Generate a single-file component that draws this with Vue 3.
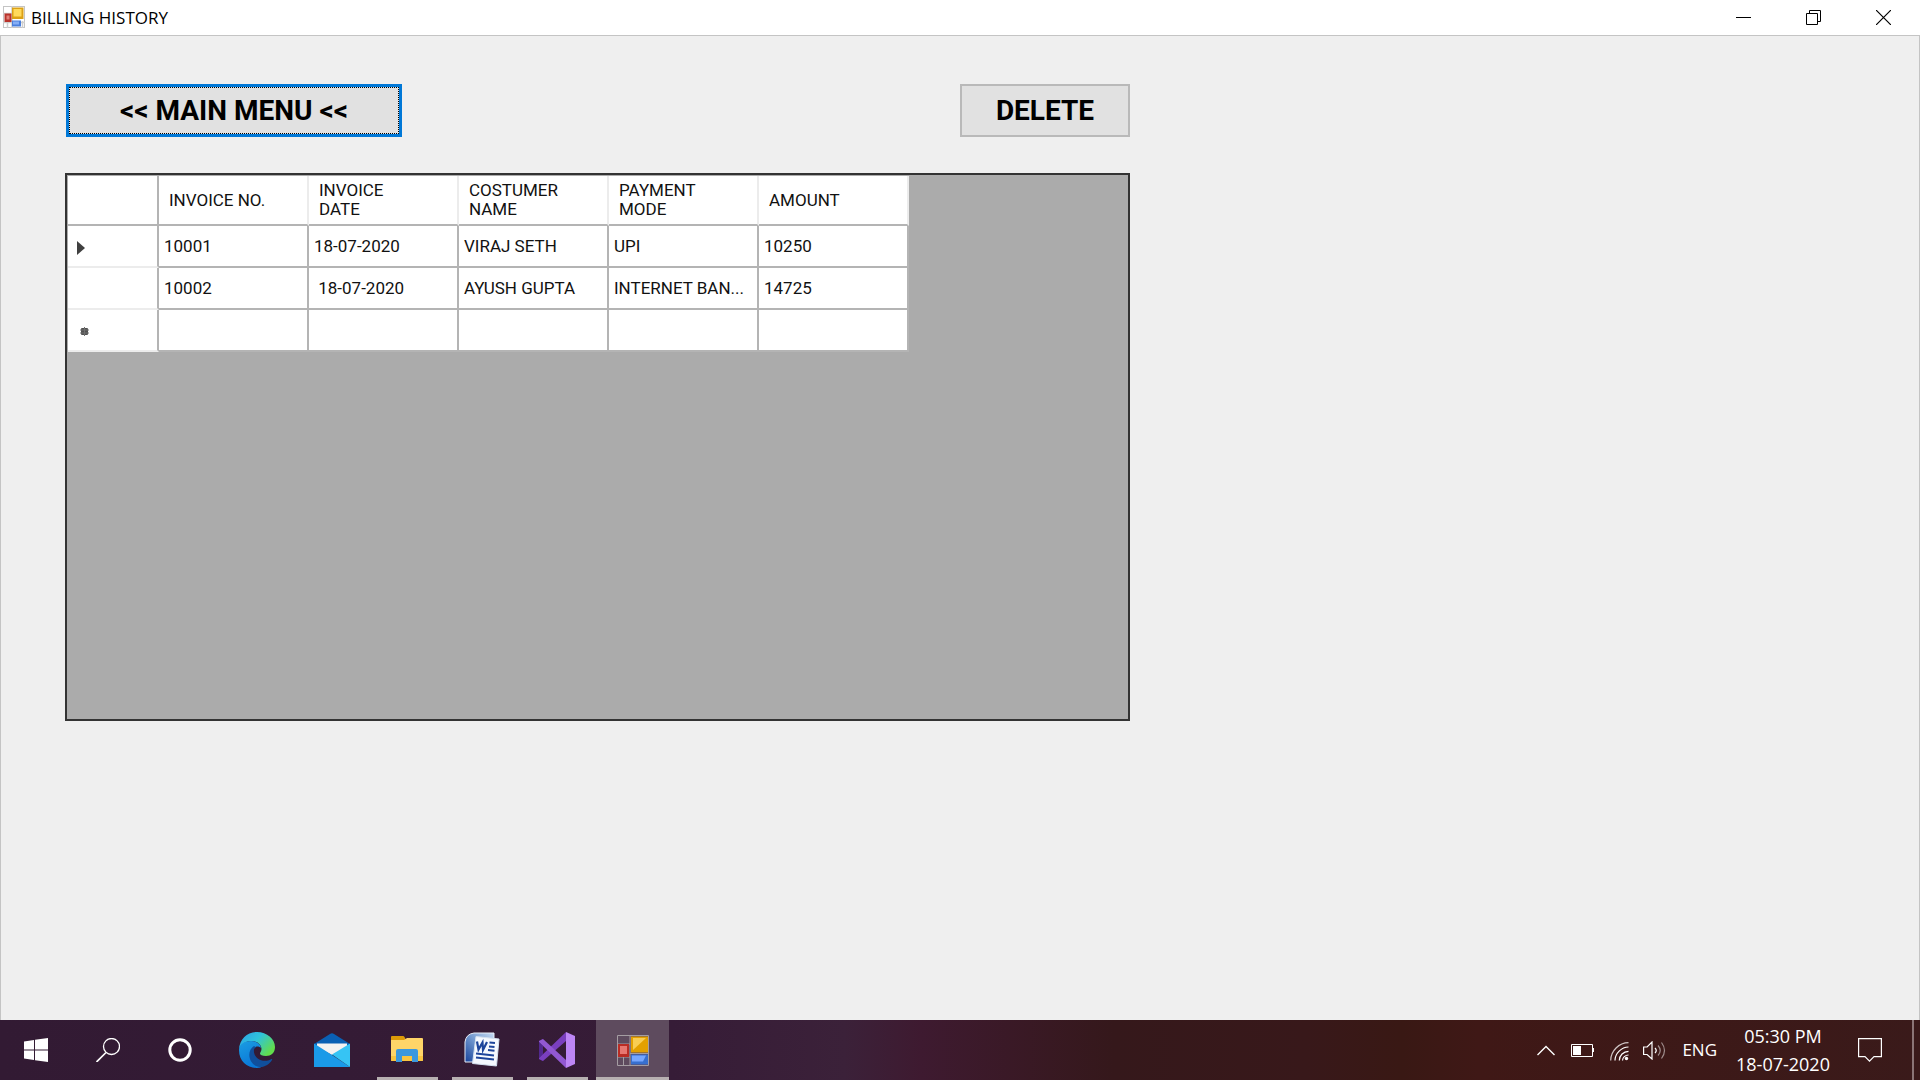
<script setup>
import { ref } from 'vue'

const columns = ['INVOICE NO.', 'INVOICE DATE', 'COSTUMER NAME', 'PAYMENT MODE', 'AMOUNT']
const rows = ref([
  { marker: 'current', cells: ['10001', '18-07-2020', 'VIRAJ SETH', 'UPI', '10250'] },
  { marker: '', cells: ['10002', '\u00a018-07-2020', 'AYUSH GUPTA', 'INTERNET BAN...', '14725'] },
  { marker: 'new', cells: ['', '', '', '', ''] },
])
</script>

<template>
  <div class="desktop">
    <header class="titlebar">
      <svg class="app-icon" width="22" height="22" viewBox="0 0 22 22" aria-hidden="true">
        <rect x="0.5" y="0.5" width="21" height="21" fill="#fff" stroke="#c4c4c4" />
        <path d="M0 7.500h9M0 16.500h22M4.500 16v6M9 0v22M19.500 15v7" stroke="#cfcfcf" stroke-width="1.500" />
        <rect x="1.500" y="7.500" width="7" height="8.500" fill="#b8322b" />
        <rect x="3.500" y="9.500" width="3" height="4" fill="#e08078" />
        <rect x="9" y="1.500" width="11.500" height="11.500" fill="#dba116" />
        <rect x="10.500" y="3" width="8" height="7.500" fill="#ffda5c" />
        <rect x="9" y="14.500" width="9" height="6" fill="#4a7fdc" />
        <rect x="10" y="15.500" width="6" height="3" fill="#85aef5" />
      </svg>
      <h1>BILLING HISTORY</h1>
      <div class="window-controls">
        <button type="button" aria-label="Minimize">
          <svg width="15" height="15" viewBox="0 0 15 15"><path d="M0 7.500h15" stroke="#000" /></svg>
        </button>
        <button type="button" aria-label="Restore">
          <svg width="15" height="15" viewBox="0 0 15 15" fill="none" stroke="#000">
            <path d="M0.500 3.500h11v11h-11zM3.500 3.500v-3h11v11h-3" />
          </svg>
        </button>
        <button type="button" aria-label="Close">
          <svg width="15" height="15" viewBox="0 0 15 15"><path d="M0 0l15 15M15 0L0 15" stroke="#000" stroke-width="1.200" /></svg>
        </button>
      </div>
    </header>

    <main class="form">
      <div class="actions">
        <button type="button" class="btn main-menu"><span>&lt;&lt; MAIN MENU &lt;&lt;</span></button>
        <button type="button" class="btn delete">DELETE</button>
      </div>
      <div class="grid-panel">
        <table>
          <colgroup>
            <col class="marker-col" />
            <col v-for="c in columns" :key="c" class="data-col" />
          </colgroup>
          <thead>
            <tr>
              <th class="marker"></th>
              <th v-for="c in columns" :key="c" scope="col"><span>{{ c }}</span></th>
            </tr>
          </thead>
          <tbody>
            <tr v-for="(row, i) in rows" :key="i">
              <th class="marker" scope="row">
                <svg v-if="row.marker === 'current'" width="8" height="14" viewBox="0 0 8 14"><path d="M0 0l8 7l-8 7z" fill="#404040" /></svg>
                <svg v-else-if="row.marker === 'new'" class="star" width="9" height="9" viewBox="0 0 9 9">
                  <rect x="1" y="1" width="7" height="7" rx="1" fill="#505050" />
                  <path d="M4.500 0v9M0 3h9M0 6h9" stroke="#707070" />
                </svg>
              </th>
              <td v-for="(cell, j) in row.cells" :key="j">{{ cell }}</td>
            </tr>
          </tbody>
        </table>
      </div>
    </main>

    <footer class="taskbar">
      <nav class="system" aria-label="System">
        <button type="button" aria-label="Start">
          <svg width="24" height="24" viewBox="0 0 24 24" fill="#fff"><path d="M0 3.400L10 2v9.500H0zM11 1.800L24 0v11.500H11zM0 12.500h10V22L0 20.600zM11 12.500h13V24l-13-1.800z" /></svg>
        </button>
        <button type="button" aria-label="Search">
          <svg width="24" height="24" viewBox="0 0 24 24" fill="none" stroke="#fff" stroke-width="1.300"><circle cx="15.500" cy="8.500" r="8" /><path d="M10 14.500L0.500 24" stroke-width="1.700" /></svg>
        </button>
        <button type="button" aria-label="Cortana">
          <svg width="24" height="24" viewBox="0 0 24 24" fill="none"><circle cx="12" cy="12" r="10.200" stroke="#fff" stroke-width="3" /></svg>
        </button>
      </nav>
      <nav class="apps" aria-label="Applications">
        <button type="button" aria-label="Microsoft Edge">
          <svg width="36" height="36" viewBox="0 0 36 36">
            <defs>
              <linearGradient id="edgeTop" x1="0" y1="0" x2="1" y2="0.600"><stop offset="0" stop-color="#2b9fe6" /><stop offset="0.500" stop-color="#2fc4dc" /><stop offset="1" stop-color="#62dc4c" /></linearGradient>
              <linearGradient id="edgeSide" x1="0" y1="0" x2="0.400" y2="1"><stop offset="0" stop-color="#1b9de2" /><stop offset="1" stop-color="#0a78d8" /></linearGradient>
            </defs>
            <path d="M0 17C1 7 8 0 18 0c10 0 18 7 18 15c0 6-4 9-9 9c-4 0-6-1-6-2.500c0-1 1.500-2 1.500-4.500c0-4-4-8-10-8C7 9 2 12 0 17z" fill="url(#edgeTop)" />
            <path d="M0 18C0 12 6 9 12 9c6 0 10 4 10 7c-2-2-5-2-7 0c-4 6-1 14 7 19.500C11 38 0 31 0 18z" fill="url(#edgeSide)" />
            <path d="M15 14c-7 4-6 16 2 20c6 3 13-1 16-6c.5-1-.3-1.300-1-.8c-7 4-16 0-17-7c-.3-2 0-4 2-5z" fill="#104f9c" />
          </svg>
        </button>
        <button type="button" aria-label="Mail">
          <svg width="36" height="34" viewBox="0 0 36 34">
            <path d="M0 11L16 1q2-1.500 4 0l16 10v5H0z" fill="#0a60b4" />
            <path d="M3 10.500h30V14L18 22L3 14z" fill="#f4f2f1" />
            <path d="M0 10.500L18 22L36 34H0z" fill="#1a9ae8" />
            <path d="M36 10.500V34L18 21.500z" fill="#36c4f4" />
          </svg>
        </button>
        <button type="button" class="open" aria-label="File Explorer">
          <svg width="32" height="28" viewBox="0 0 32 28">
            <path d="M0 1q0-1 1-1h11q1 0 1.500 1L15 4H0z" fill="#dc9b08" />
            <path d="M0 4h13l3-2h15q1 0 1 1v21q0 1-1 1H1q-1 0-1-1z" fill="#ffd568" />
            <path d="M0 20h32v4q0 1-1 1H1q-1 0-1-1z" fill="#f9c540" />
            <path d="M5 26V15q0-2 2-2h18q2 0 2 2v11h-6v-6H11v6z" fill="#3b98dd" />
          </svg>
        </button>
        <button type="button" class="open" aria-label="Microsoft Word">
          <svg width="36" height="36" viewBox="0 0 36 36">
            <defs><linearGradient id="wordBack" x1="0" y1="1" x2="1" y2="0"><stop offset="0" stop-color="#16429a" /><stop offset="0.500" stop-color="#6d94cc" /><stop offset="1" stop-color="#c7dcf4" /></linearGradient></defs>
            <path d="M10 1h20v29H1V10Q2 2 10 1z" fill="url(#wordBack)" stroke="#e8eef8" />
            <path d="M12 4.500l23 2.500l-2.500 27l-24-2.500z" fill="#f5f9ff" stroke="#d4e1f0" />
            <path d="M13 9.500l1.500 8l4-7l.5 7.500l4-8" fill="none" stroke="#1d459b" stroke-width="2.200" />
            <path d="M25.500 10.500l5.500.5M25 14.500l5.500.5M24 18l6.500.7M12 21.500l18 2M12 25.500l18 2" fill="none" stroke="#1d459b" stroke-width="2" />
          </svg>
        </button>
        <button type="button" class="open" aria-label="Visual Studio">
          <svg width="36" height="36" viewBox="0 0 36 36">
            <path d="M0 9l4-2v22l-4-2z" fill="#52288f" />
            <path d="M0 26L27 0v9L4 29L0 27z" fill="#7a3fbe" />
            <path d="M4 7l23 21v8L0 10V9z" fill="#9258d2" />
            <path d="M0 10l4 4v8l-4 4z" fill="#52288f" />
            <path d="M27 0l9 4v28l-9 4z" fill="#bd86f5" />
          </svg>
        </button>
        <button type="button" class="open active" aria-label="Billing History">
          <svg width="32" height="31" viewBox="0 0 32 31">
            <path d="M0.500 0.500h31v30H0.500zM0 9h13M0 22h13M6.500 22v8M13 0v31M13 18.500h19" fill="none" stroke="#a49da2" />
            <rect x="1" y="9" width="11" height="13" fill="#b92c24" /><rect x="3" y="11" width="7" height="8" fill="#e77770" />
            <rect x="14" y="1.500" width="17" height="16" fill="#e3a000" /><path d="M16 3h13L16 15z" fill="#f8cd54" />
            <rect x="14" y="19.500" width="17" height="10" fill="#376fcf" /><path d="M15 20.500h14l-3 6H15z" fill="#76a6ff" />
          </svg>
        </button>
      </nav>
      <div class="tray">
        <button type="button" class="chevron" aria-label="Show hidden icons">
          <svg width="18" height="11" viewBox="0 0 18 11"><path d="M0.500 10L9 1.500L17.500 10" fill="none" stroke="#fff" stroke-width="1.400" /></svg>
        </button>
        <button type="button" class="battery" aria-label="Battery">
          <svg width="23" height="13" viewBox="0 0 23 13"><path d="M0.500 0.500h21v12h-21z" fill="none" stroke="#fff" /><path d="M2 2h8v9H2zM22 4h1v4h-1z" fill="#fff" /></svg>
        </button>
        <button type="button" class="wifi" aria-label="Network">
          <svg width="19" height="19" viewBox="0 0 19 19" fill="none" stroke="#fff" stroke-width="1.200">
            <path d="M0.700 18.500C0.700 9 9 0.700 18.500 0.700" opacity=".75" /><path d="M5 18.500C5 11.500 11.500 5 18.500 5M9.300 18.500c0-5 4.200-9.200 9.200-9.200M12.500 18.500c0-3 3-5.500 6-5.500" />
            <circle cx="16.500" cy="16.500" r="1.700" fill="#fff" stroke="none" />
          </svg>
        </button>
        <button type="button" class="volume" aria-label="Volume">
          <svg width="23" height="19" viewBox="0 0 23 19" fill="none" stroke="#fff" stroke-width="1.200">
            <path d="M0.600 6h3.500L9 1v17l-4.900-4.500H0.600z" /><path d="M12 7q2.500 2.500 0 5" /><path d="M15 4.500q4.500 5 0 10M18.500 1.500q6 8 0 16" opacity=".5" />
          </svg>
        </button>
        <button type="button" class="language">ENG</button>
        <button type="button" class="clock"><span>05:30 PM</span><span>18-07-2020</span></button>
        <button type="button" class="notifications" aria-label="Notifications">
          <svg width="24" height="24" viewBox="0 0 24 24"><path d="M0.600 0.600h22.800v18H16l-4.500 4.500L7 18.600H0.600z" fill="none" stroke="#fff" stroke-width="1.200" /></svg>
        </button>
        <button type="button" class="show-desktop" aria-label="Show desktop"></button>
      </div>
    </footer>
  </div>
</template>

<style>
body {
  margin: 0;
}
</style>

<style scoped>
.desktop {
  min-height: 100vh;
  display: flex;
  flex-direction: column;
  background: #efefef;
  color: #000;
  font-family: "Open Sans", "Noto Sans", sans-serif;
}
button {
  padding: 0;
  border: 0;
  background: none;
  color: inherit;
  font: inherit;
}
svg {
  display: block;
}
.titlebar {
  height: 35px;
  display: flex;
  align-items: center;
  padding-left: 3px;
  background: #fff;
}
.titlebar h1 {
  margin: 0 0 0 6px;
  font-size: 17px;
  line-height: 24px;
  font-weight: 400;
}
.app-icon {
  margin-bottom: 2px;
}
.window-controls {
  margin: 0 2px 0 auto;
  display: flex;
}
.window-controls button {
  width: 70px;
  height: 33px;
  display: grid;
  place-items: center;
}
.form {
  flex: 1;
  padding: 48px 64px;
  border: 1px solid #c4c4c4;
  border-bottom: 0;
}
.actions {
  max-width: 1065px;
  display: flex;
  justify-content: space-between;
  box-sizing: border-box;
  padding-left: 1px;
}
.btn {
  height: 53px;
  box-sizing: border-box;
  background: #e1e1e1;
  font-family: Roboto, "Open Sans", sans-serif;
  font-size: 28px;
  line-height: 36px;
  font-weight: 700;
}
.main-menu {
  width: 336px;
  border: 3px solid #0078d7;
}
.main-menu span {
  display: block;
  height: 45px;
  line-height: 45px;
  border: 1px dotted #000;
}
.delete {
  width: 170px;
  border: 2px solid #b9b9b9;
}
.grid-panel {
  max-width: 1065px;
  height: 548px;
  box-sizing: border-box;
  margin-top: 36px;
  padding: 1px 0 0 1px;
  border: 2px solid #333;
  background: #ababab;
}
table {
  width: 841px;
  table-layout: fixed;
  border-collapse: separate;
  border-spacing: 0;
  background: #fff;
  font-family: Roboto, "Liberation Sans", sans-serif;
  font-size: 17px;
  line-height: 19px;
  color: #111;
}
.marker-col {
  width: 91px;
}
.data-col {
  width: 150px;
}
th,
td {
  height: 42px;
  box-sizing: border-box;
  border-right: 2px solid #b4b4b4;
  border-bottom: 2px solid #b4b4b4;
  text-align: left;
  font-weight: 400;
}
td {
  padding: 0 4px 0 5px;
  white-space: nowrap;
}
thead th {
  height: 50px;
  padding: 0 40px 0 10px;
  border-right-color: #ececec;
}
thead th:nth-child(2),
thead th:last-child {
  padding-right: 0;
}
thead th.marker {
  border-right-color: #b4b4b4;
}
tbody .marker {
  padding: 3px 0 0 9px;
  border-bottom-color: #ececec;
}
.star {
  margin-left: 3px;
}
.taskbar {
  height: 60px;
  display: flex;
  color: #fff;
  background: linear-gradient(90deg, #321a33 0%, #361c37 35%, #3b2139 44%, #3e1a30 48%, #35181b 58%, #38181a 68%, #391814 73%, #3f1816 77%, #3a1a1a 100%);
}
.system,
.apps,
.tray {
  display: flex;
}
.system button {
  width: 72px;
  display: grid;
  place-items: center;
}
.apps {
  margin-left: 3px;
}
.apps button {
  position: relative;
  width: 75px;
  display: grid;
  place-items: center;
}
.open::after {
  content: "";
  position: absolute;
  bottom: 0;
  left: 8px;
  right: 6px;
  height: 3px;
  background: #b7b0b1;
}
.apps .active {
  width: 73px;
  margin-left: 2px;
  background: #5e4b5e;
}
.active::after {
  left: 0;
  right: 0;
}
.tray {
  margin-left: auto;
  align-items: center;
}
.battery {
  margin-left: 16px;
}
.wifi {
  margin: 2px 0 0 16px;
}
.volume {
  margin-left: 14px;
}
.language {
  margin-left: 16px;
  font-size: 17px;
  line-height: 28px;
}
.clock {
  width: 112px;
  margin-left: 10px;
  font-size: 18px;
  line-height: 28px;
}
.clock span {
  display: block;
}
.notifications {
  margin-left: 19px;
}
.show-desktop {
  align-self: stretch;
  width: 8px;
  margin-left: 30px;
  border-left: 2px solid #8b7576;
}
</style>
